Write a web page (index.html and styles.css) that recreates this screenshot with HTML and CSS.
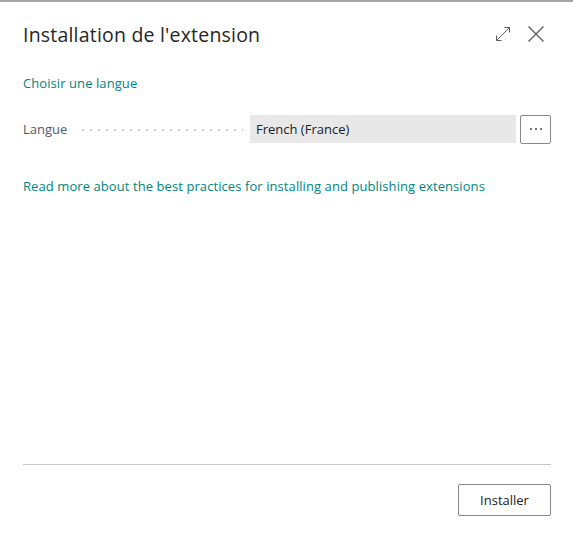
FILE: index.html
```html
<!DOCTYPE html>
<html>
<head>
<meta charset="utf-8">
<link rel="stylesheet" href="styles.css">
</head>
<body>
<div class="dialog">
  <header class="head">
    <h1 class="title">Installation de l'extension</h1>
    <div class="tools">
      <svg class="ico" width="16" height="16" viewBox="0 0 16 16"><path d="M1.5 14.5 L14.5 1.5 M9.5 1.5 H14.5 V6.5 M1.5 9.5 V14.5 H6.5" fill="none" stroke="#605e5c" stroke-width="1"/></svg>
      <svg class="ico" width="18" height="18" viewBox="0 0 18 18"><path d="M1.5 1.5 L16.5 16.5 M16.5 1.5 L1.5 16.5" fill="none" stroke="#605e5c" stroke-width="1.4"/></svg>
    </div>
  </header>
  <main class="body">
    <a class="link section">Choisir une langue</a>
    <div class="field">
      <span class="label">Langue</span>
      <span class="leader"></span>
      <div class="input">French (France)</div>
      <button class="more"><span class="dots"><i></i><i></i><i></i></span></button>
    </div>
    <a class="link readmore">Read more about the best practices for installing and publishing extensions</a>
  </main>
  <footer class="foot">
    <button class="btn">Installer</button>
  </footer>
</div>
</body>
</html>
```
FILE: styles.css
```css
* { box-sizing: border-box; }
html, body { margin: 0; padding: 0; background: #fff; }
body { font-family: "Open Sans", "Noto Sans", sans-serif; color: #212121; width: 573px; height: 538px; overflow: hidden; }
.dialog { border-top: 2px solid #a6a6a6; height: 538px; display: flex; flex-direction: column; padding: 0 22px 0 23px; }
.head { display: flex; align-items: center; justify-content: space-between; padding-top: 16px; height: 48px; }
.title { margin: 0; font-size: 19.5px; font-weight: 500; letter-spacing: 0.2px; color: #262626; }
.tools { display: flex; gap: 16px; align-items: center; margin-right: 6px; }
.ico { display: block; }
.body { flex: 1; display: flex; flex-direction: column; }
.link { color: #00857f; font-size: 13px; letter-spacing: 0.08px; }
.section { margin-top: 24px; }
.field { display: flex; align-items: center; margin-top: 23px; height: 28px; }
.label { font-size: 13px; color: #505a66; letter-spacing: 0; width: 56px; }
.leader { width: 164px; margin-right: 7px; height: 2px; margin-top: 1px;
  background-image: radial-gradient(circle, #cfcfcf 0.8px, transparent 1.1px);
  background-size: 8px 2px; background-repeat: repeat-x; }
.input { flex: 1; height: 28px; background: #e8e8e9; font-size: 13px; color: #212121; line-height: 28px; padding-left: 6px; letter-spacing: 0; }
.more { width: 31px; height: 29px; margin-left: 4px; border: 1px solid #8a8886; background: #fff; border-radius: 2px; padding: 0; display: flex; align-items: center; justify-content: center; }
.dots { display: flex; gap: 3px; }
.dots i { width: 2px; height: 2px; background: #444; border-radius: 50%; display: block; }
.readmore { margin-top: 34px; }
.foot { border-top: 1px solid #c8c8c8; height: 74px; display: flex; justify-content: flex-end; padding-top: 19px; }
.btn { width: 93px; height: 32px; border: 1px solid #8a8886; border-radius: 2px; background: #fff; font-family: inherit; font-size: 13px; color: #212121; font-weight: 400; }
```
